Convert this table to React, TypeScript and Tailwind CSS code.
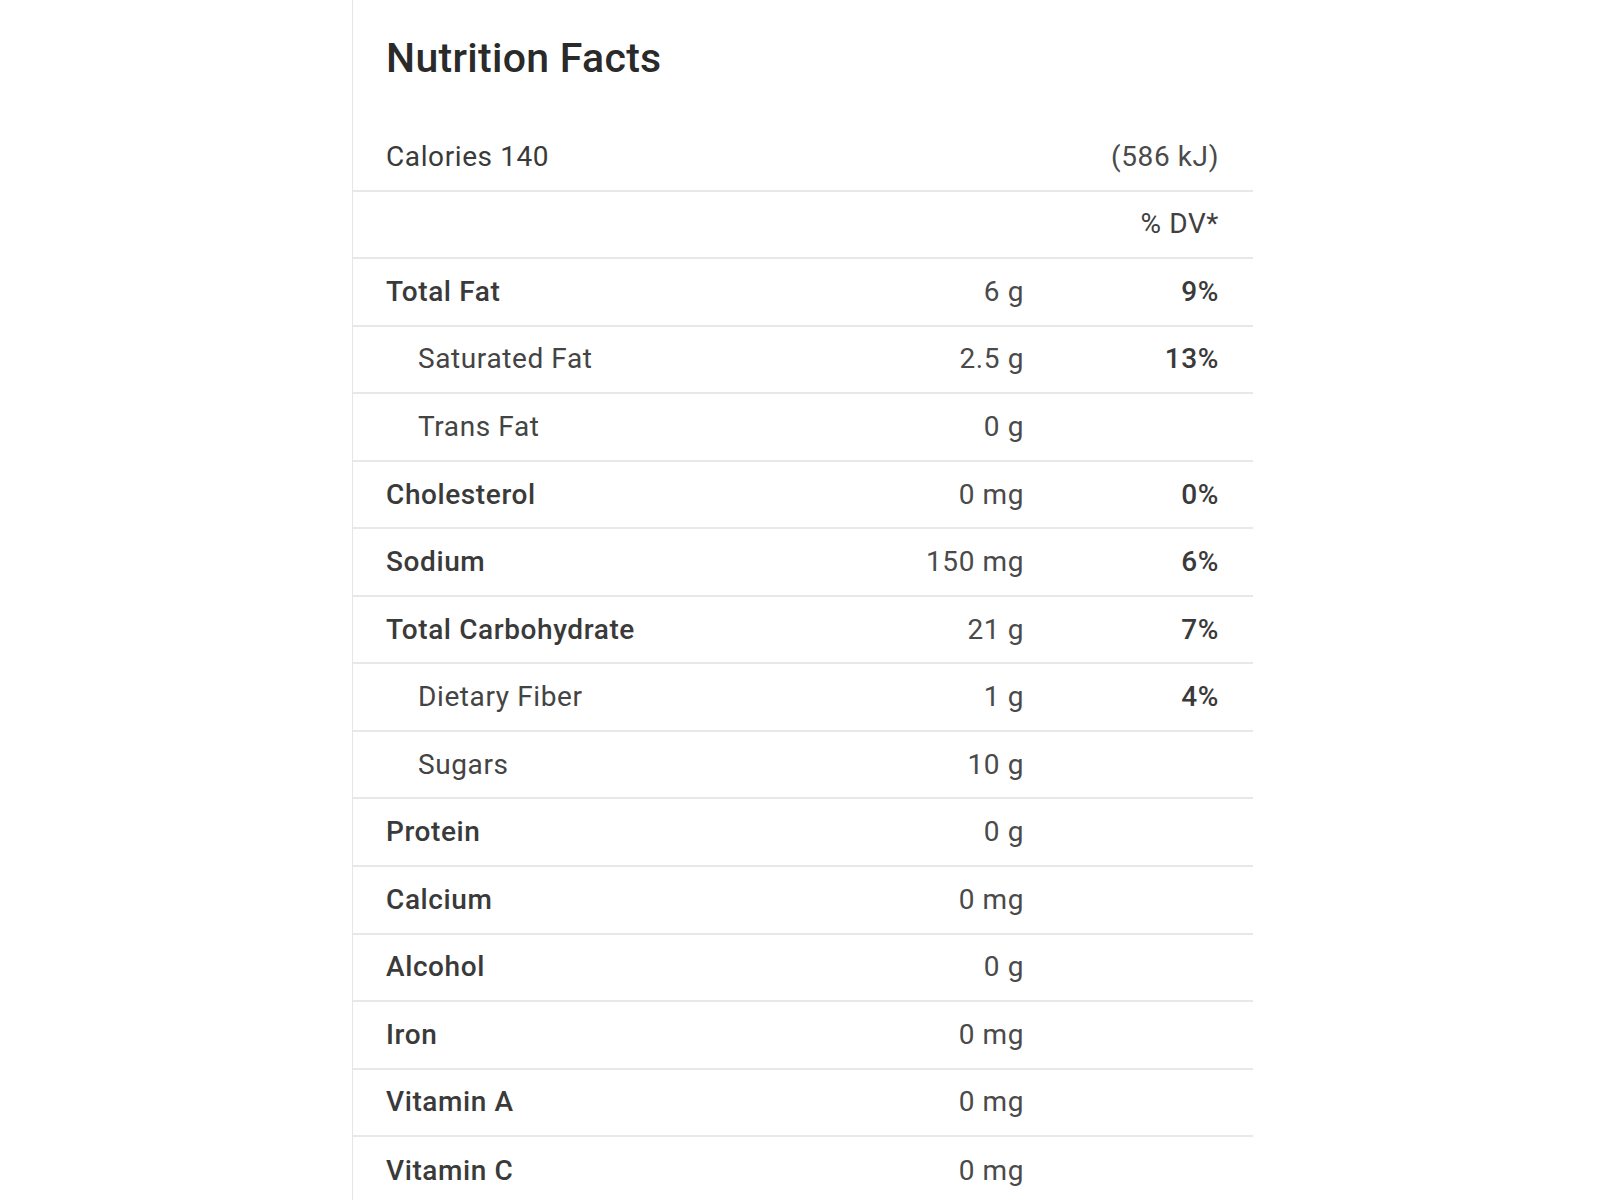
import React from "react";

type Row = { label: string; value?: string; dv?: string; sub?: boolean; bold?: boolean };

const rows: Row[] = [
  { label: "Total Fat", value: "6 g", dv: "9%", bold: true },
  { label: "Saturated Fat", value: "2.5 g", dv: "13%", sub: true },
  { label: "Trans Fat", value: "0 g", sub: true },
  { label: "Cholesterol", value: "0 mg", dv: "0%", bold: true },
  { label: "Sodium", value: "150 mg", dv: "6%", bold: true },
  { label: "Total Carbohydrate", value: "21 g", dv: "7%", bold: true },
  { label: "Dietary Fiber", value: "1 g", dv: "4%", sub: true },
  { label: "Sugars", value: "10 g", sub: true },
  { label: "Protein", value: "0 g", bold: true },
  { label: "Calcium", value: "0 mg", bold: true },
  { label: "Alcohol", value: "0 g", bold: true },
  { label: "Iron", value: "0 mg", bold: true },
  { label: "Vitamin A", value: "0 mg", bold: true },
  { label: "Vitamin C", value: "0 mg", bold: true },
];

export default function App() {
  return (
    <div
      className="min-h-[1200px] w-[1600px] bg-white overflow-hidden"
      style={{ fontFamily: "Roboto, 'Liberation Sans', sans-serif" }}
    >
      <div className="ml-[352px] w-[901px] min-h-[1200px] border-l border-[#e6e6e6]">
        <div className="h-[124px] pl-[33px] pt-[33px]">
          <h1 className="text-[41px] leading-[50px] font-medium text-[#2a2a2a] tracking-[0.3px]">
            Nutrition Facts
          </h1>
        </div>
        <div className="flex h-[67.55px] items-center border-b-2 border-[#e8e8e8] pl-[33px] pr-[34px] text-[28px] tracking-[0.6px] text-[#3a3a3a]">
          <div className="flex-1">Calories 140</div>
          <div className="text-[#4a4a4a]">(586 kJ)</div>
        </div>
        <div className="flex h-[67.55px] items-center border-b-2 border-[#e8e8e8] pl-[33px] pr-[34px] text-[28px] tracking-[0.6px] text-[#3a3a3a]">
          <div className="flex-1" />
          <div className="text-[#404040]">% DV*</div>
        </div>
        {rows.map((r, i) => (
          <div
            key={r.label}
            className={
              "flex h-[67.55px] items-center pl-[33px] pr-[34px] text-[28px] tracking-[0.6px] " +
              (i < rows.length - 1 ? "border-b-2 border-[#e8e8e8]" : "")
            }
          >
            <div
              className={
                r.sub
                  ? "flex-1 pl-[32px] font-normal text-[#444444]"
                  : "flex-1 font-medium text-[#3a3a3a]"
              }
            >
              {r.label}
            </div>
            <div className="w-[200px] text-right text-[#4a4a4a]">{r.value}</div>
            <div className="w-[195px] text-right font-medium text-[#3a3a3a]">{r.dv}</div>
          </div>
        ))}
      </div>
    </div>
  );
}
